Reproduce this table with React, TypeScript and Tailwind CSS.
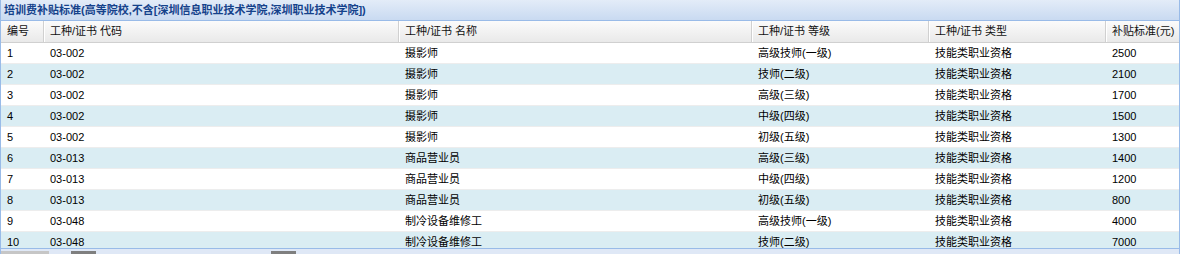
import React from "react";

const cols = [
  { title: "编号", w: "w-[43px]" },
  { title: "工种/证书 代码", w: "w-[355px]" },
  { title: "工种/证书 名称", w: "w-[353px]" },
  { title: "工种/证书 等级", w: "w-[177px]" },
  { title: "工种/证书 类型", w: "w-[177px]" },
  { title: "补贴标准(元)", w: "flex-1" },
];

const rows = [
  ["1", "03-002", "摄影师", "高级技师(一级)", "技能类职业资格", "2500"],
  ["2", "03-002", "摄影师", "技师(二级)", "技能类职业资格", "2100"],
  ["3", "03-002", "摄影师", "高级(三级)", "技能类职业资格", "1700"],
  ["4", "03-002", "摄影师", "中级(四级)", "技能类职业资格", "1500"],
  ["5", "03-002", "摄影师", "初级(五级)", "技能类职业资格", "1300"],
  ["6", "03-013", "商品营业员", "高级(三级)", "技能类职业资格", "1400"],
  ["7", "03-013", "商品营业员", "中级(四级)", "技能类职业资格", "1200"],
  ["8", "03-013", "商品营业员", "初级(五级)", "技能类职业资格", "800"],
  ["9", "03-048", "制冷设备维修工", "高级技师(一级)", "技能类职业资格", "4000"],
  ["10", "03-048", "制冷设备维修工", "技师(二级)", "技能类职业资格", "7000"],
];

export default function App() {
  return (
    <div
      className="w-[1180px] h-[254px] overflow-hidden bg-white text-[11px] text-black"
      style={{ fontFamily: '"Liberation Sans", "Noto Sans CJK SC", sans-serif' }}
    >
      <div className="flex h-[254px] flex-col border-x border-[#99bbe8]">
        {/* Title bar */}
        <div className="flex h-[21px] shrink-0 items-center whitespace-nowrap border-b border-[#99bbe8] bg-gradient-to-b from-[#e3ecf8] to-[#c9daf1] pl-[3px] text-[11px] font-bold leading-none text-[#15428b]">
          培训费补贴标准(高等院校,不含[深圳信息职业技术学院,深圳职业技术学院])
        </div>

        {/* Header */}
        <div className="flex h-[22px] shrink-0 border-b border-[#d0d0d0] bg-gradient-to-b from-[#fbfbfb] to-[#e9e9e9]">
          {cols.map((c, i) => (
            <div
              key={i}
              className={`${c.w} flex items-center whitespace-nowrap pl-[6px] leading-none text-[#111] ${
                i < cols.length - 1 ? "border-r border-[#d0d0d0] shadow-[1px_0_0_#fff]" : ""
              }`}
            >
              {c.title}
            </div>
          ))}
        </div>

        {/* Body */}
        <div className="h-[205px] shrink-0 overflow-hidden">
          {rows.map((r, ri) => (
            <div
              key={ri}
              className={`flex h-[21px] border-b border-[#ededed] ${ri % 2 === 1 ? "bg-[#daedf3]" : "bg-white"}`}
            >
              {r.map((cell, ci) => (
                <div key={ci} className={`${cols[ci].w} flex items-center whitespace-nowrap pl-[6px] leading-none`}>
                  {cell}
                </div>
              ))}
            </div>
          ))}
        </div>

        {/* Pager strip (cut off) */}
        <div className="flex flex-1 items-end border-t border-[#99bbe8] bg-[#dfe8f6]">
          <div className="h-[3px] w-[48px] bg-[#c6c6c6]" />
          <div className="ml-[22px] h-[3px] w-[25px] bg-[#7f7f7f]" />
          <div className="ml-[175px] h-[3px] w-[25px] bg-[#7f7f7f]" />
        </div>
      </div>
    </div>
  );
}
